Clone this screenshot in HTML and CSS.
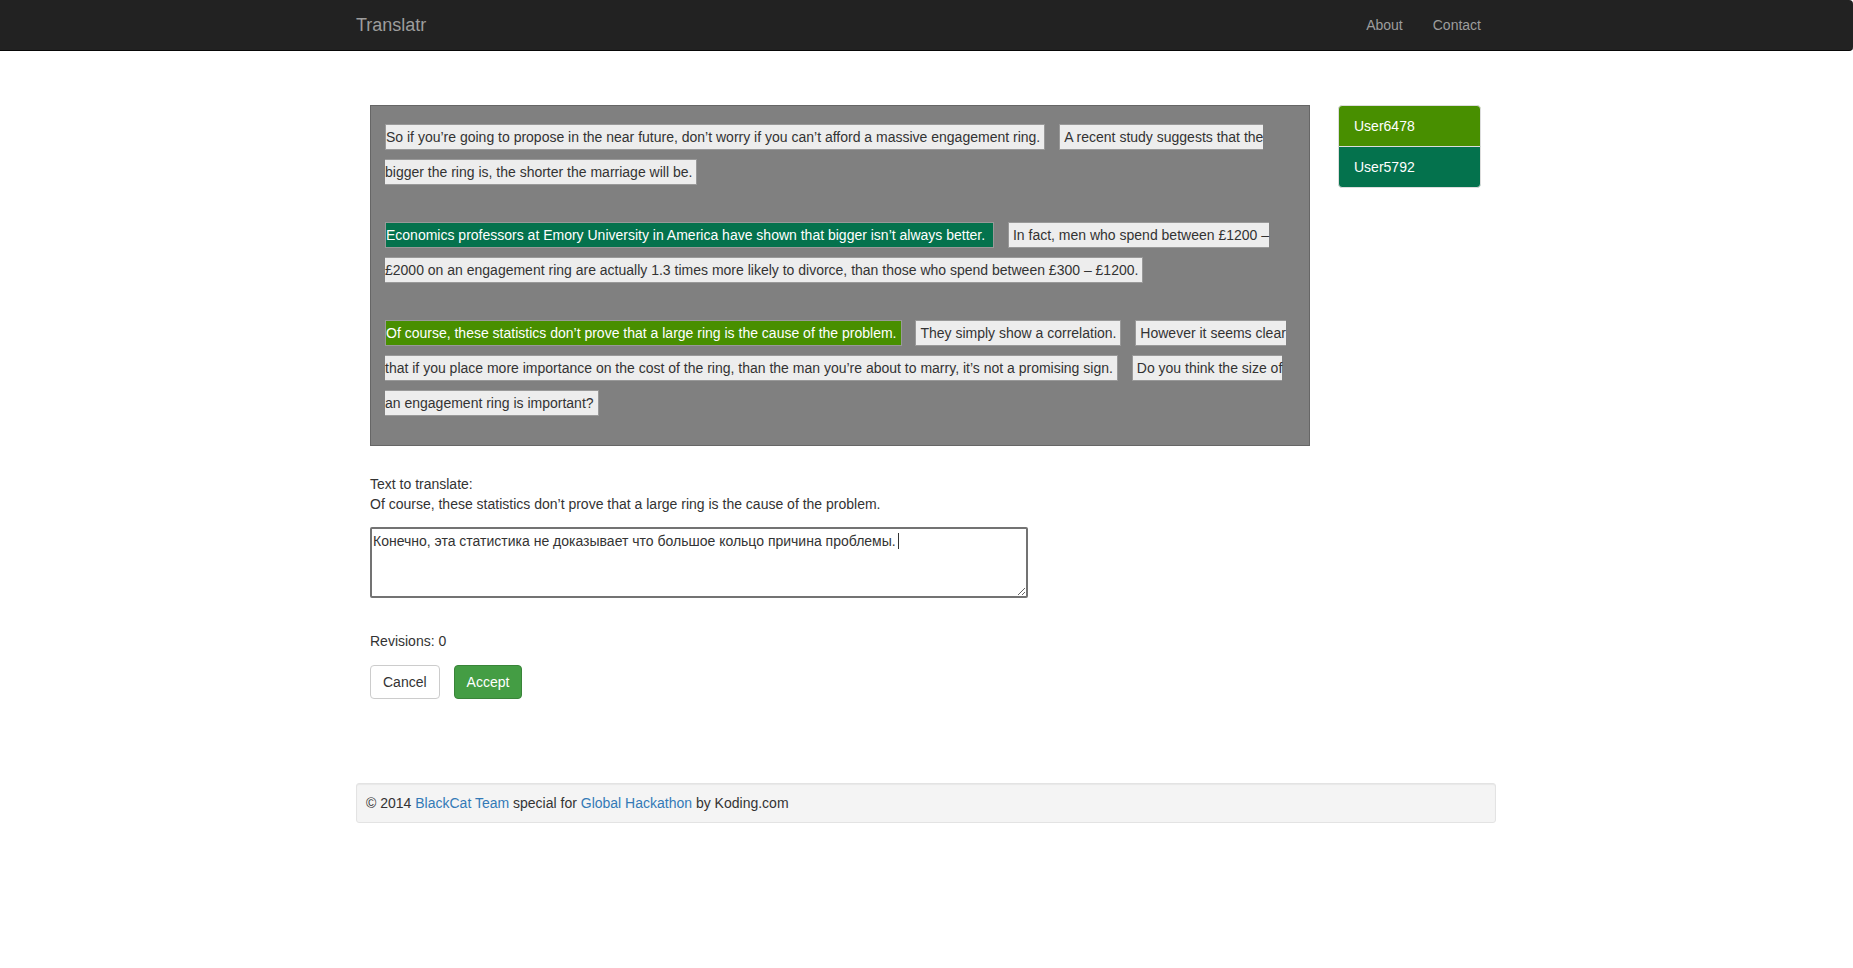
FILE: index.html
```html
<!DOCTYPE html>
<html lang="en">
<head>
<meta charset="utf-8">
<title>Translatr</title>
<link rel="stylesheet" href="styles.css">
</head>
<body>
<header class="navbar">
  <div class="container navbar-inner">
    <a class="brand" href="#">Translatr</a>
    <nav class="nav">
      <a href="#about">About</a>
      <a href="#contact">Contact</a>
    </nav>
  </div>
</header>
<div class="container">
  <div class="workspace">
    <main>
      <article class="document">
        <p><span class="sentence">So if you’re going to propose in the near future, don’t worry if you can’t afford a massive engagement ring.</span> <span class="sentence">A recent study suggests that the bigger the ring is, the shorter the marriage will be.</span></p>
        <p><span class="sentence teal">Economics professors at Emory University in America have shown that bigger isn’t always better.&nbsp;</span> <span class="sentence">In fact, men who spend between £1200 – £2000 on an engagement ring are actually 1.3 times more likely to divorce, than those who spend between £300 – £1200.</span></p>
        <p><span class="sentence green">Of course, these statistics don’t prove that a large ring is the cause of the problem.</span> <span class="sentence">They simply show a correlation.</span> <span class="sentence">However it seems clear that if you place more importance on the cost of the ring, than the man you’re about to marry, it’s not a promising sign.</span> <span class="sentence">Do you think the size of an engagement ring is important?</span></p>
      </article>
      <form class="editor">
        <label for="translation">Text to translate:<br>Of course, these statistics don’t prove that a large ring is the cause of the problem.</label>
        <div class="field">
          <textarea id="translation">Конечно, эта статистика не доказывает что большое кольцо причина проблемы.</textarea>
          <span class="caret"></span>
        </div>
        <div class="revisions">Revisions: 0</div>
        <div class="actions">
          <button type="button" class="btn">Cancel</button>
          <button type="button" class="btn btn-accept">Accept</button>
        </div>
      </form>
    </main>
    <aside>
      <ul class="users">
        <li class="green">User6478</li>
        <li class="teal">User5792</li>
      </ul>
    </aside>
  </div>
  <footer class="footer">© 2014 <a href="#team">BlackCat Team</a> special for <a href="#hackathon">Global Hackathon</a> by Koding.com</footer>
</div>
</body>
</html>
```
FILE: styles.css
```css
* { box-sizing: border-box; }
body {
  margin: 0;
  background: #fff;
  color: #333;
  font: 14px/20px "Liberation Sans", Arial, sans-serif;
}
a { color: #337ab7; text-decoration: none; }
p { margin: 0; }
.container { max-width: 1171px; margin: 0 auto; padding: 0 16px 0 15px; }

.navbar {
  background: #222;
  border-bottom: 1px solid #080808;
  border-radius: 0 4px 4px 0;
}
.navbar-inner { display: flex; justify-content: space-between; }
.navbar a { color: #9d9d9d; padding: 15px; }
.navbar .brand { font-size: 18px; padding-left: 0; }
.nav { display: flex; }

.workspace {
  display: grid;
  grid-template-columns: 940fr 143fr;
  gap: 28px;
  padding: 54px 15px 84px 14px;
}
.document {
  background: #808080;
  border: 1px solid #666;
  padding: 14px 14px 24px;
  line-height: 35px;
}
.document p + p { margin-top: 28px; }
.sentence {
  background: #ededed;
  border: 1px solid #999;
  padding: 4px;
  margin-right: 10px;
}
.sentence:first-child { padding-left: 0; }
.sentence:last-child { margin-right: 0; }
.sentence.green, .sentence.teal { color: #fff; }
.sentence.green { background: #488f00; }
.sentence.teal { background: #04724d; }

.editor { margin-top: 28px; }
.editor label { display: block; }
.field { position: relative; margin-top: 13px; }
textarea {
  display: block;
  width: 70%;
  height: 71px;
  padding: 2px 1px;
  border: 2px solid #737373;
  border-radius: 2px;
  outline: 0;
  background: #fff;
  color: inherit;
  font: inherit;
}
.caret {
  position: absolute;
  left: 528px;
  top: 6px;
  width: 1px;
  height: 16px;
  background: #333;
}
.revisions { margin-top: 33px; }
.actions { display: flex; gap: 14px; margin-top: 14px; }
.btn {
  padding: 6px 12px;
  border: 1px solid #ccc;
  border-radius: 4px;
  background: #fff;
  color: #333;
  font: inherit;
}
.btn-accept { background: #449d44; border-color: #398439; color: #fff; }

.users { margin: 0; padding: 0; list-style: none; }
.users li {
  padding: 10px 15px;
  border: 1px solid #ddd;
  color: #fff;
}
.users .green { background: #488f00; }
.users .teal { background: #04724d; }
.users li + li { margin-top: -1px; }
.users li:first-child { border-radius: 4px 4px 0 0; }
.users li:last-child { border-radius: 0 0 4px 4px; }

.footer {
  padding: 9px;
  border: 1px solid #e3e3e3;
  border-radius: 3px;
  background: #f4f4f4;
  box-shadow: inset 0 1px 1px rgba(0, 0, 0, .05);
}
```
